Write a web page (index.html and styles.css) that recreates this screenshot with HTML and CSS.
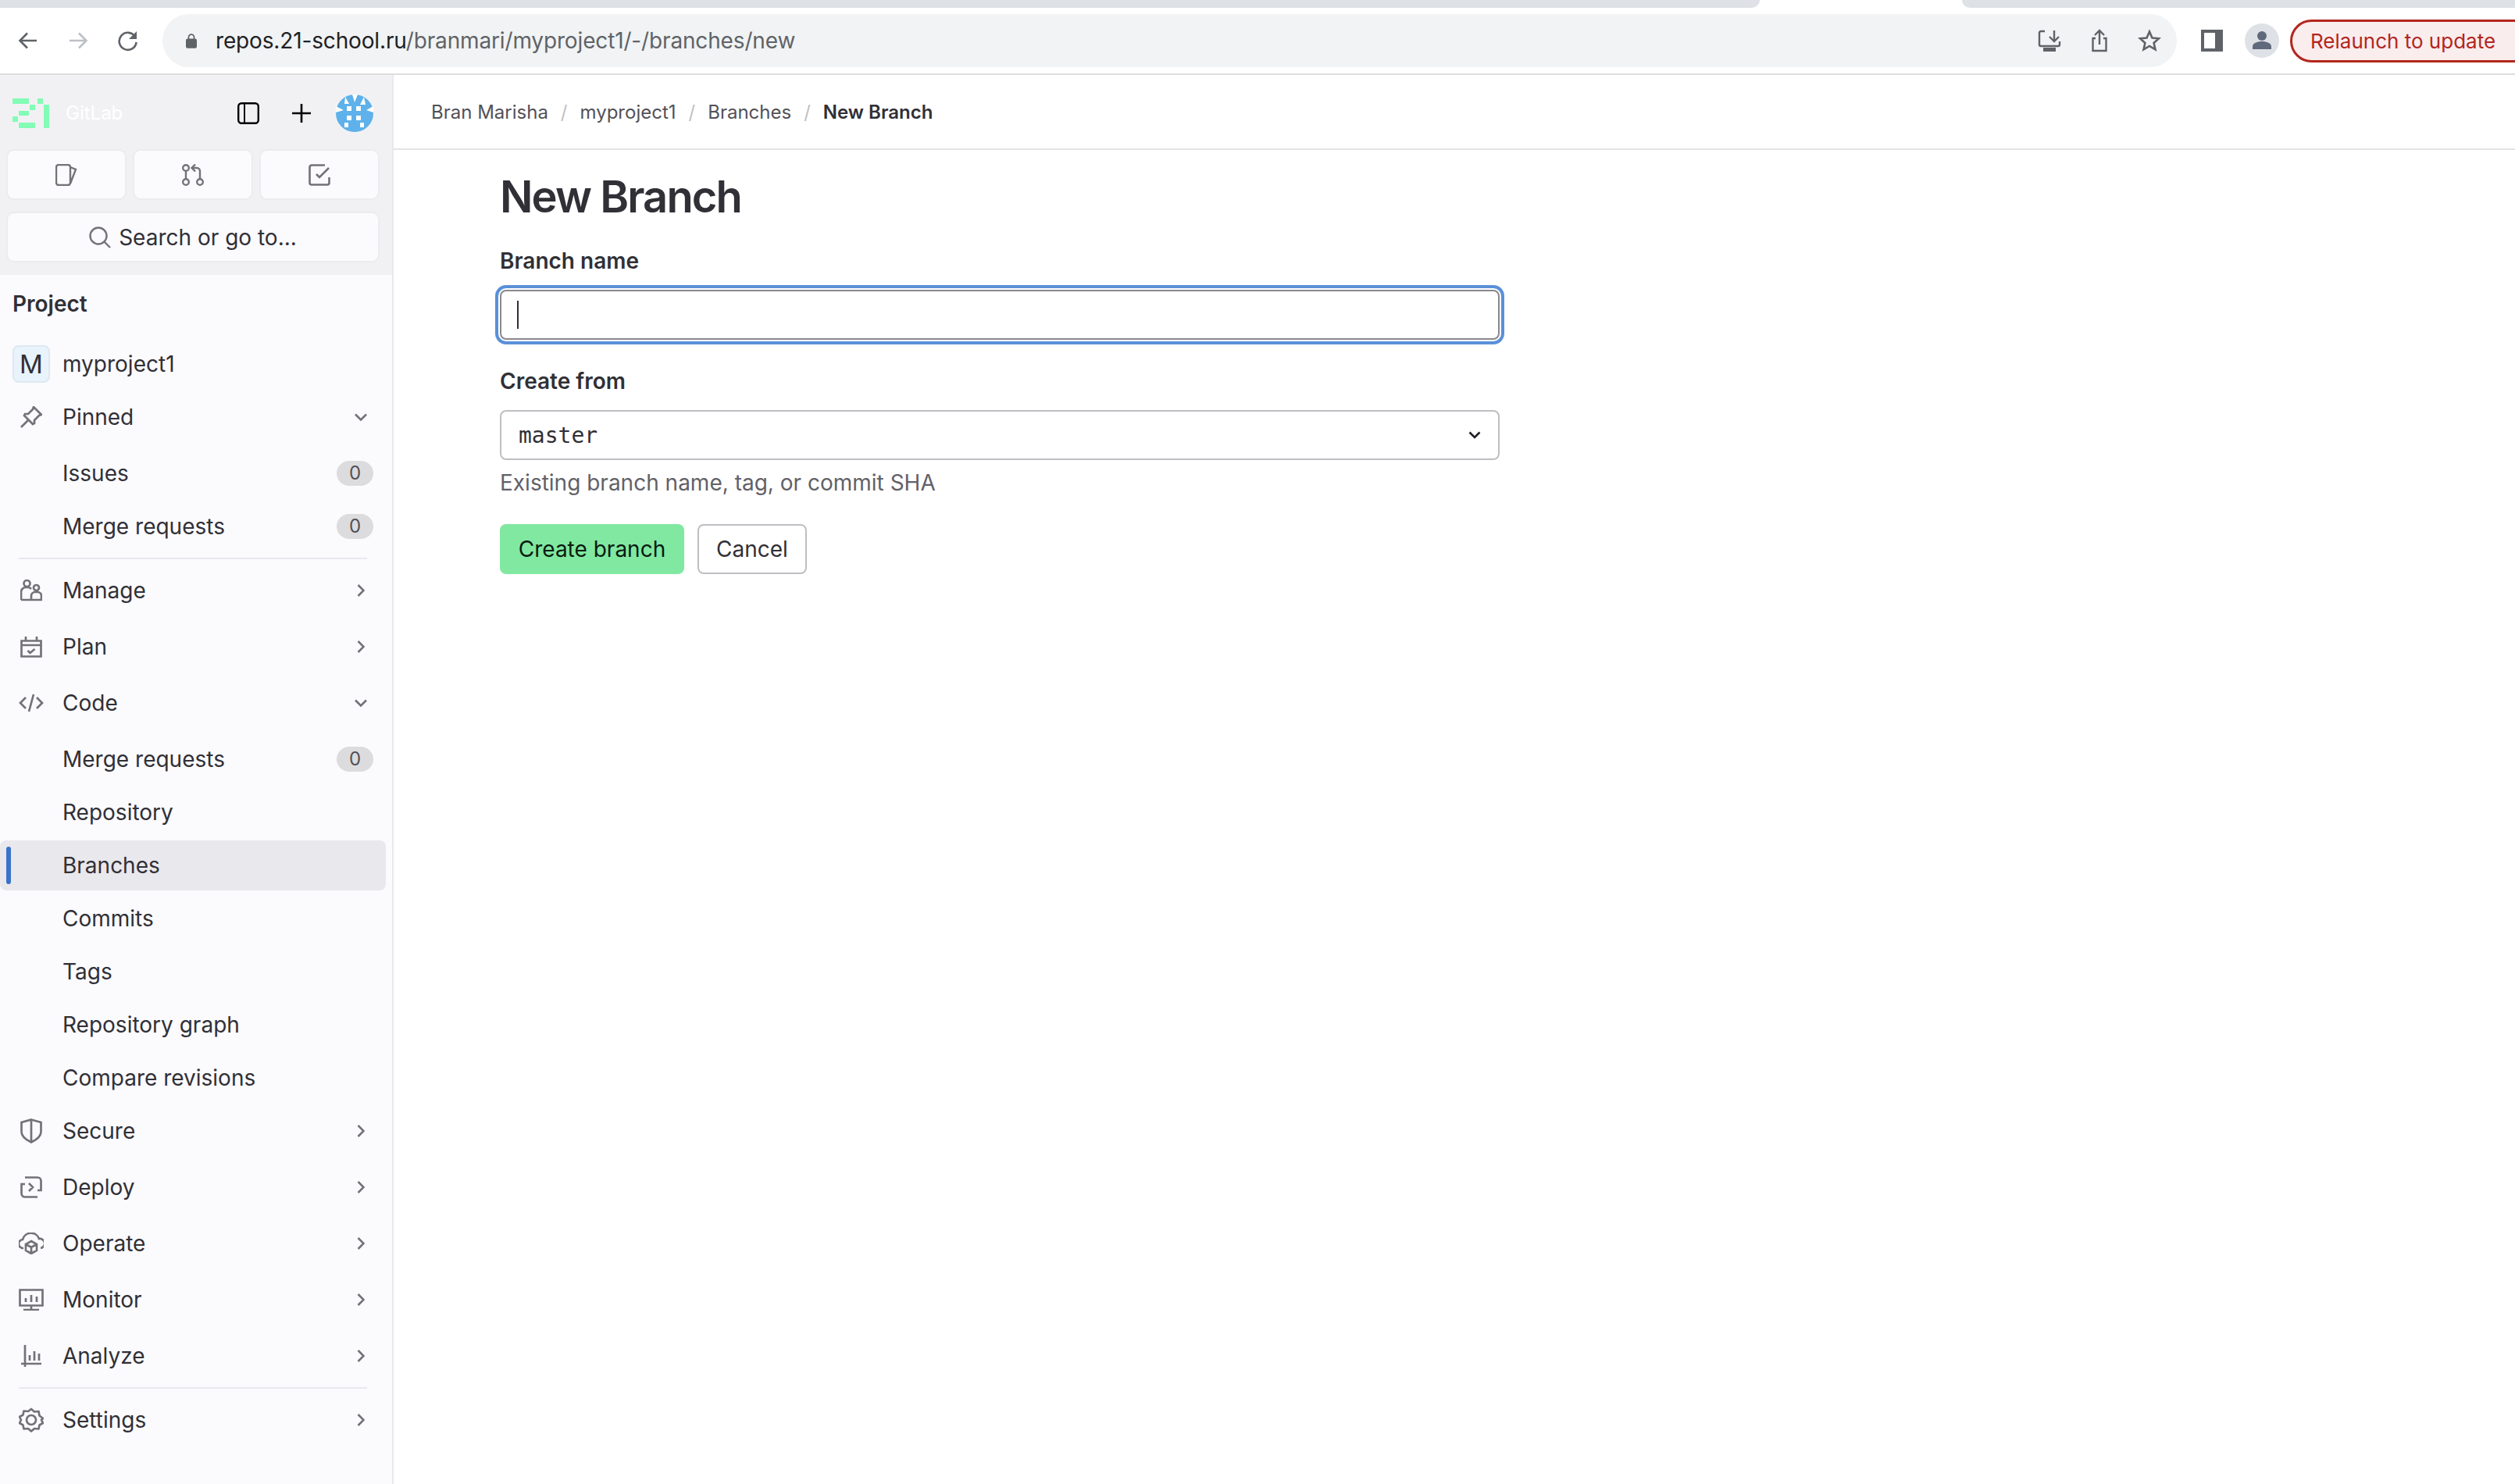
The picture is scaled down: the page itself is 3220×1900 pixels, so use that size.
FILE: index.html
```html
<!DOCTYPE html>
<html lang="en">
<head>
    <meta charset="UTF-8">
    <title>New Branch</title>
    <link rel="stylesheet" href="styles.css">
</head>
<body>

<div class="tabstrip">
    <div class="tab-left"></div>
    <div class="tab-right"></div>
</div>

<div class="toolbar">
    <div class="nav-icons">
        <svg class="nav-icon" viewBox="0 0 28 28"><path d="M25 14H4M13 4.500 3.500 14l9.500 9.500" fill="none" stroke="#5f6368" stroke-width="2.600"/></svg>
        <svg class="nav-icon" viewBox="0 0 28 28"><path d="M3 14h21M15 4.500l9.500 9.500-9.500 9.500" fill="none" stroke="#bdc0c4" stroke-width="2.600"/></svg>
        <svg class="nav-icon" viewBox="0 0 28 28"><path d="M23 9a11 11 0 1 0 1.600 7" fill="none" stroke="#5f6368" stroke-width="2.600"/><path d="M25 2v10H15z" fill="#5f6368"/></svg>
    </div>
    <div class="omnibox">
        <svg class="lock" viewBox="0 0 16 24"><path d="M4 10V7a4 4 0 0 1 8 0v3" fill="none" stroke="#5f6368" stroke-width="2"/><rect x="0" y="9" width="16" height="14" rx="2.500" fill="#5f6368"/></svg>
        <div class="url"><span class="url-host">repos.21-school.ru</span>/branmari/myproject1/-/branches/new</div>
        <div class="omni-icons">
            <svg class="omni-icon" viewBox="0 0 30 30"><path d="M9 3H4a2 2 0 0 0-2 2v15a2 2 0 0 0 2 2h22a2 2 0 0 0 2-2v-4M21 2v13M15 10l6 6 6-6" fill="none" stroke="#5f6368" stroke-width="2.400"/><rect x="7" y="24" width="16" height="5" fill="#5f6368"/></svg>
            <svg class="omni-icon" viewBox="0 0 30 30"><path d="M15 20V2M9 8l6-6 6 6M10 12H6.500v16h17V12H20" fill="none" stroke="#5f6368" stroke-width="2.400"/></svg>
            <svg class="omni-icon" viewBox="0 0 30 30"><path d="m15 3.500 3.500 8 8.500.8-6.400 5.700 1.900 8.400-7.500-4.400-7.500 4.400 1.900-8.400L3 12.300l8.500-.8z" fill="none" stroke="#5f6368" stroke-width="2.600"/></svg>
        </div>
    </div>
    <div class="side-panel-btn"></div>
    <div class="profile">
        <svg viewBox="0 0 44 44"><circle cx="22" cy="22" r="22" fill="#dee1e6"/><circle cx="22" cy="16" r="6" fill="#5f6a7c"/><path d="M10 33v-3c0-5 6-7 12-7s12 2 12 7v3z" fill="#5f6a7c"/></svg>
    </div>
    <div class="relaunch">Relaunch to update</div>
</div>

<div class="page">
    <aside class="sidebar">
        <div class="sidebar-top">
            <div class="brand-row">
                <svg class="logo" viewBox="0 0 47 38">
                    <path d="M0 0h21v7H0zM22 8h7v7h-7zM8 16h13v6H8zM0 23h7v7H0zM8 31h21v7H8zM32 0h7v7h-7zM40 8h7v30h-7z" fill="#83fcb5"/>
                </svg>
                <span class="brand-name">GitLab</span>
                <svg class="panel-icon" viewBox="0 0 28 28"><rect x="1.200" y="1.200" width="25.600" height="25.600" rx="4" fill="none" stroke="#000" stroke-width="2.400"/><path d="M9 2v24" stroke="#000" stroke-width="2"/></svg>
                <svg class="plus-icon" viewBox="0 0 24 24"><path d="M12 0v24M0 12h24" stroke="#000" stroke-width="2.600"/></svg>
                <svg class="avatar" viewBox="0 0 48 48">
                    <circle cx="24" cy="24" r="24" fill="#5eb1ea"/>
                    <path d="M12 3l5 9h-6zM21 0l3 10 4-10zM36 3l-5 10h7zM0 15l10 5-10 3zM48 15l-9 5 9 3z" fill="#fff"/>
                    <path d="M14 15h6v6h-6zM26 15h6v6h-6zM14 27h6v6h-6zM26 27h6v6h-6zM11 36h5v6h-5zM31 36h5v6h-5z" fill="#fff"/>
                </svg>
            </div>
            <div class="quick-row">
                <div class="quick-btn">
                    <svg class="icon" viewBox="0 0 28 28"><path d="M17 1H4a3 3 0 0 0-3 3v20a3 3 0 0 0 3 3h12a3 3 0 0 0 3-3V4a3 3 0 0 0-2-3zm2 3 7 3-7 18" fill="none" stroke="#737278" stroke-width="2.400"/></svg>
                </div>
                <div class="quick-btn">
                    <svg class="icon" viewBox="0 0 28 28"><g fill="none" stroke="#737278" stroke-width="2.400"><circle cx="5" cy="5" r="3.800"/><circle cx="5" cy="23" r="3.800"/><circle cx="23" cy="23" r="3.800"/><path d="M5 9v10M23 19V9a4 4 0 0 0-4-4h-6M17 .500 12.500 5l4.500 4.500"/></g></svg>
                </div>
                <div class="quick-btn">
                    <svg class="icon" viewBox="0 0 28 28"><path d="M21 1.500H4A2.500 2.500 0 0 0 1.500 4v20A2.500 2.500 0 0 0 4 26.500h20a2.500 2.500 0 0 0 2.500-2.500v-7M10 13l4 4 12-12" fill="none" stroke="#737278" stroke-width="2.600"/></svg>
                </div>
            </div>
            <div class="search-btn">
                <svg class="search-icon" viewBox="0 0 28 28"><circle cx="12" cy="12" r="10.500" fill="none" stroke="#737278" stroke-width="2.400"/><path d="m19.500 19.500 7.500 7.500" stroke="#737278" stroke-width="2.400"/></svg>
                <span>Search or go to...</span>
            </div>
        </div>

        <nav class="nav">
            <div class="nav-title">Project</div>

            <div class="project-row">
                <span class="project-avatar">M</span>
                <span>myproject1</span>
            </div>

            <div class="section">
                <svg class="icon" viewBox="0 0 28 28"><path d="M17 1l10 10-3 1-6 6 0 4-2 1L5 12l1-2h4l6-6zM10 18 1 27" fill="none" stroke="#737278"/></svg>
                <span class="label">Pinned</span>
                <svg class="chev-down" viewBox="0 0 16 10"><path d="M1 1.500 8 8.500l7-7" fill="none" stroke="#737278" stroke-width="2.600"/></svg>
            </div>
            <div class="subs">
                <div class="sub"><span class="label">Issues</span><span class="badge">0</span></div>
                <div class="sub"><span class="label">Merge requests</span><span class="badge">0</span></div>
            </div>
            <div class="divider"></div>

            <div class="section">
                <svg class="icon" viewBox="0 0 28 28"><g fill="none" stroke="#737278"><circle cx="8.500" cy="5" r="4"/><circle cx="20.500" cy="10.500" r="3.500"/><path d="M1 26V16a6 6 0 0 1 6-6h3a6 6 0 0 1 4 2M14 26v-5a5 5 0 0 1 5-5h3a5 5 0 0 1 5 5v5zM1 26h26"/></g></svg>
                <span class="label">Manage</span>
                <svg class="chev-right" viewBox="0 0 10 16"><path d="M1.500 1 8.500 8l-7 7" fill="none" stroke="#737278" stroke-width="2.600"/></svg>
            </div>
            <div class="section">
                <svg class="icon" viewBox="0 0 28 28"><path d="M1.500 6.500h25v20h-25zM1.500 12h25M7 1v5M21 1v5" fill="none" stroke="#737278"/><path d="m9.500 19 3 3 6-5" fill="none" stroke="#737278"/></svg>
                <span class="label">Plan</span>
                <svg class="chev-right" viewBox="0 0 10 16"><path d="M1.500 1 8.500 8l-7 7" fill="none" stroke="#737278" stroke-width="2.600"/></svg>
            </div>
            <div class="section">
                <svg class="icon icon-wide" viewBox="0 0 32 28"><path d="M9 7 2 14l7 7M23 7l7 7-7 7M19 3l-6 22" fill="none" stroke="#737278"/></svg>
                <span class="label">Code</span>
                <svg class="chev-down" viewBox="0 0 16 10"><path d="M1 1.500 8 8.500l7-7" fill="none" stroke="#737278" stroke-width="2.600"/></svg>
            </div>
            <div class="subs">
                <div class="sub"><span class="label">Merge requests</span><span class="badge">0</span></div>
                <div class="sub"><span class="label">Repository</span></div>
                <div class="sub active"><span class="label">Branches</span></div>
                <div class="sub"><span class="label">Commits</span></div>
                <div class="sub"><span class="label">Tags</span></div>
                <div class="sub"><span class="label">Repository graph</span></div>
                <div class="sub"><span class="label">Compare revisions</span></div>
            </div>

            <div class="section">
                <svg class="icon icon-tall" viewBox="0 0 28 32"><path d="M14 1.500 26.500 5v12c0 6-5 10-12.500 13.500C6.500 27 1.500 23 1.500 17V5zM14 2v28" fill="none" stroke="#737278"/></svg>
                <span class="label">Secure</span>
                <svg class="chev-right" viewBox="0 0 10 16"><path d="M1.500 1 8.500 8l-7 7" fill="none" stroke="#737278" stroke-width="2.600"/></svg>
            </div>
            <div class="section">
                <svg class="icon" viewBox="0 0 28 28"><path d="M6 1.500h16a4.500 4.500 0 0 1 4.500 4.500v12H22M22 26.500H6A4.500 4.500 0 0 1 1.500 22V10H6M11 9l5 5-5 5" fill="none" stroke="#737278"/></svg>
                <span class="label">Deploy</span>
                <svg class="chev-right" viewBox="0 0 10 16"><path d="M1.500 1 8.500 8l-7 7" fill="none" stroke="#737278" stroke-width="2.600"/></svg>
            </div>
            <div class="section">
                <svg class="icon icon-wide" viewBox="0 0 32 28"><path d="M6 20a5.500 5.500 0 0 1-1-11 11 11 0 0 1 21-1 6 6 0 0 1 2 12" fill="none" stroke="#737278"/><path d="m16 11 7 4v8l-7 4-7-4v-8zM9 15l7 4 7-4M16 19v8" fill="none" stroke="#737278"/></svg>
                <span class="label">Operate</span>
                <svg class="chev-right" viewBox="0 0 10 16"><path d="M1.500 1 8.500 8l-7 7" fill="none" stroke="#737278" stroke-width="2.600"/></svg>
            </div>
            <div class="section">
                <svg class="icon icon-wide" viewBox="0 0 32 28"><path d="M1.500 1.500h29v20h-29zM16 22v5M6 27h20M9 12v5M16 8v9M23 10v7" fill="none" stroke="#737278"/></svg>
                <span class="label">Monitor</span>
                <svg class="chev-right" viewBox="0 0 10 16"><path d="M1.500 1 8.500 8l-7 7" fill="none" stroke="#737278" stroke-width="2.600"/></svg>
            </div>
            <div class="section">
                <svg class="icon" viewBox="0 0 28 28"><path d="M6 0v28M1 24h26M12 13v7M18 8v12M24 11v9" fill="none" stroke="#737278"/></svg>
                <span class="label">Analyze</span>
                <svg class="chev-right" viewBox="0 0 10 16"><path d="M1.500 1 8.500 8l-7 7" fill="none" stroke="#737278" stroke-width="2.600"/></svg>
            </div>
            <div class="divider"></div>
            <div class="section">
                <svg class="icon icon-wide icon-gear" viewBox="0 0 32 32"><circle cx="16" cy="16" r="6" fill="none" stroke="#737278"/><path d="m16 2 4 3.500 5.500-.5 1 5.500L31 14l-2 2 2 4-4.500 2.500-1 5-5.500-.5-4 3.500-4-3.500-5.500.5-1-5L1 20l2-4-2-4 4.500-2.500 1-5 5.500.5z" fill="none" stroke="#737278" stroke-linejoin="round"/></svg>
                <span class="label">Settings</span>
                <svg class="chev-right" viewBox="0 0 10 16"><path d="M1.500 1 8.500 8l-7 7" fill="none" stroke="#737278" stroke-width="2.600"/></svg>
            </div>
        </nav>
    </aside>

    <main class="content">
        <div class="breadcrumbs">
            <span>Bran Marisha</span><span class="sep">/</span>
            <span>myproject1</span><span class="sep">/</span>
            <span>Branches</span><span class="sep">/</span>
            <span class="current">New Branch</span>
        </div>
        <div class="form-wrap">
            <h1>New Branch</h1>
            <label class="field-label">Branch name</label>
            <div class="input-focus"><span class="caret"></span></div>
            <label class="field-label from-label">Create from</label>
            <div class="select-box">
                <span class="mono">master</span>
                <svg class="select-chev" viewBox="0 0 16 10"><path d="M1.500 1.500 8 8l6.500-6.500" fill="none" stroke="#1f1e24" stroke-width="2.600"/></svg>
            </div>
            <p class="help">Existing branch name, tag, or commit SHA</p>
            <div class="actions">
                <button class="btn-create">Create branch</button>
                <button class="btn-cancel">Cancel</button>
            </div>
        </div>
    </main>
</div>

</body>
</html>
```

FILE: styles.css
```css
html, body {
    margin: 0;
    height: 100%;
    overflow: hidden;
}
body {
    font-family: Inter, "Noto Sans", sans-serif;
    font-size: 28px;
    color: #303036;
    background-color: white;
    display: flex;
    flex-direction: column;
}
.tabstrip {
    height: 10px;
    display: flex;
    flex-shrink: 0;
}
.tab-left {
    width: 2253px;
    background-color: #dee1e6;
    border-bottom-right-radius: 12px;
}
.tab-right {
    flex: 1;
    margin-left: 259px;
    background-color: #dee1e6;
    border-bottom-left-radius: 12px;
}
.toolbar {
    height: 86px;
    flex-shrink: 0;
    box-sizing: border-box;
    border-bottom: 2px solid #dedede;
    display: flex;
    align-items: center;
    overflow: hidden;
}
.nav-icons {
    width: 208px;
    flex-shrink: 0;
    box-sizing: border-box;
    padding-left: 22px;
    display: flex;
    gap: 36px;
}
.nav-icon {
    width: 28px;
    height: 28px;
}
.omnibox {
    width: 2579px;
    height: 68px;
    flex-shrink: 0;
    border-radius: 34px;
    background-color: #f1f3f4;
    display: flex;
    align-items: center;
    box-sizing: border-box;
    padding-left: 30px;
}
.lock {
    width: 14px;
    height: 22px;
}
.url {
    margin-left: 24px;
    font-size: 28px;
    letter-spacing: -0.15px;
    color: #5f6368;
    flex: 1;
}
.url-host {
    color: #202124;
}
.omni-icons {
    display: flex;
    gap: 34px;
    padding-right: 20px;
}
.omni-icon {
    width: 30px;
    height: 30px;
}
.side-panel-btn {
    width: 28px;
    height: 28px;
    flex-shrink: 0;
    box-sizing: border-box;
    margin-left: 31px;
    border: 4px solid #5f6368;
    border-right-width: 10px;
}
.profile {
    margin-left: 28px;
    width: 44px;
    height: 44px;
    flex-shrink: 0;
}
.profile svg {
    display: block;
    width: 44px;
    height: 44px;
}
.relaunch {
    margin-left: 14px;
    width: 320px;
    flex-shrink: 0;
    height: 55px;
    box-sizing: border-box;
    border: 3px solid #b3261e;
    border-radius: 28px;
    background-color: #f9eded;
    color: #b3261e;
    font-size: 26px;
    line-height: 49px;
    padding-left: 23px;
    white-space: nowrap;
}
.page {
    flex: 1;
    display: flex;
    min-height: 0;
}
.sidebar {
    width: 504px;
    box-sizing: border-box;
    border-right: 2px solid #e8e8ee;
    background-color: #fbfafd;
    flex-shrink: 0;
}
.sidebar-top {
    background-color: #f1f1f3;
    height: 256px;
    box-sizing: border-box;
    padding: 0 18px 0 10px;
}
.brand-row {
    height: 97px;
    display: flex;
    align-items: center;
    padding-left: 6px;
}
.logo {
    width: 47px;
    height: 38px;
}
.brand-name {
    margin-left: 21px;
    font-size: 24px;
    color: #fff;
    flex: 1;
}
.panel-icon {
    width: 28px;
    height: 28px;
}
.plus-icon {
    width: 24px;
    height: 24px;
    margin-left: 42px;
}
.avatar {
    width: 48px;
    height: 48px;
    margin-left: 32px;
    margin-right: 6px;
}
.quick-row {
    display: flex;
    gap: 12px;
}
.quick-btn {
    flex: 1;
    height: 61px;
    border-radius: 8px;
    background-color: #fbfafd;
    box-shadow: 0 0 0 2px #ececef;
    display: flex;
    align-items: center;
    justify-content: center;
}
.search-btn {
    margin-top: 19px;
    height: 61px;
    border-radius: 8px;
    background-color: #fbfafd;
    box-shadow: 0 0 0 2px #ececef;
    display: flex;
    align-items: center;
    justify-content: center;
    gap: 10px;
}
.search-icon {
    width: 28px;
    height: 28px;
}
.icon {
    width: 28px;
    height: 28px;
    flex-shrink: 0;
    stroke-width: 2.700;
}
.icon-wide {
    width: 32px;
    margin: 0 -2px;
}
.icon-tall {
    height: 32px;
}
.icon-gear {
    height: 32px;
}
.nav {
    padding: 0 10px;
}
.nav-title {
    font-weight: 600;
    height: 82px;
    line-height: 74px;
    padding-left: 6px;
}
.project-row {
    height: 64px;
    display: flex;
    align-items: center;
    padding-left: 6px;
    gap: 16px;
}
.project-avatar {
    width: 48px;
    height: 48px;
    box-sizing: border-box;
    border: 2px solid #dfe8f0;
    border-radius: 8px;
    background-color: #e9f3fc;
    text-align: center;
    line-height: 44px;
    font-size: 33px;
}
.section {
    height: 72px;
    display: flex;
    align-items: center;
    padding-left: 16px;
    padding-right: 22px;
    gap: 26px;
}
.section .label {
    flex: 1;
}
.chev-down {
    width: 16px;
    height: 10px;
}
.chev-right {
    width: 10px;
    height: 16px;
    margin-right: 3px;
}
.subs {
    margin: 2px 0 -2px;
}
.sub {
    height: 68px;
    display: flex;
    align-items: center;
    justify-content: space-between;
    padding-left: 70px;
    padding-right: 14px;
    box-sizing: border-box;
}
.sub.active {
    height: 64px;
    margin: 2px -2px 2px -10px;
    padding-left: 80px;
    background-color: #e9e8ec;
    border-radius: 8px;
    position: relative;
}
.sub.active::before {
    content: "";
    position: absolute;
    left: 8px;
    top: 8px;
    bottom: 8px;
    width: 6px;
    border-radius: 3px;
    background-color: #3a73c8;
}
.badge {
    width: 47px;
    height: 32px;
    border-radius: 16px;
    background-color: #dcdcde;
    color: #535158;
    font-size: 24px;
    line-height: 32px;
    text-align: center;
}
.divider {
    height: 2px;
    margin: 4px 22px 4px 14px;
    background-color: #e8e8ee;
}
.subs + .divider {
    margin-top: 8px;
}
.content {
    flex: 1;
}
.breadcrumbs {
    height: 96px;
    box-sizing: border-box;
    border-bottom: 2px solid #e3e3e6;
    display: flex;
    align-items: center;
    padding-left: 48px;
    font-size: 24px;
    color: #535158;
    gap: 16px;
}
.sep {
    color: #bfbfc3;
}
.current {
    color: #303036;
    font-weight: 600;
}
.form-wrap {
    padding-left: 136px;
    width: 1280px;
}
h1 {
    margin: 0;
    font-size: 56px;
    letter-spacing: -1.9px;
    line-height: 72px;
    padding-top: 24px;
    font-weight: 600;
}
.field-label {
    display: block;
    margin-top: 26px;
    font-weight: 600;
    line-height: 40px;
}
.from-label {
    margin-top: 33px;
}
.input-focus {
    margin-top: 17px;
    height: 64px;
    box-sizing: border-box;
    border: 2px solid #89888d;
    border-radius: 8px;
    background-color: white;
    box-shadow: 0 0 0 2px white, 0 0 0 6px #5a90d9;
    display: flex;
    align-items: center;
    padding-left: 20px;
}
.caret {
    width: 2px;
    height: 36px;
    background-color: #303036;
}
.select-box {
    margin-top: 17px;
    height: 64px;
    box-sizing: border-box;
    border: 2px solid #bfbfc3;
    border-radius: 8px;
    display: flex;
    align-items: center;
    justify-content: space-between;
    padding: 0 22px;
}
.mono {
    font-family: "DejaVu Sans Mono", monospace;
    font-size: 28px;
}
.select-chev {
    width: 16px;
    height: 10px;
}
.help {
    margin: 9px 0 0;
    line-height: 40px;
    color: #626168;
}
.actions {
    margin-top: 33px;
    display: flex;
    gap: 17px;
}
.actions button {
    height: 64px;
    font-family: inherit;
    font-size: 28px;
    border-radius: 8px;
    padding: 0;
    cursor: pointer;
}
.btn-create {
    width: 236px;
    border: none;
    background-color: #80e8a0;
    color: #0b1a10;
}
.btn-cancel {
    width: 140px;
    border: 2px solid #bfbfc3;
    background-color: white;
    color: #303036;
}
```
